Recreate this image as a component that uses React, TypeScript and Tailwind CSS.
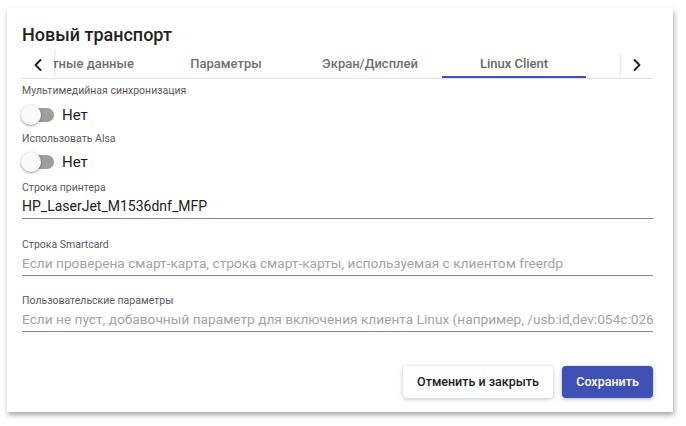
import { ChevronLeft, ChevronRight } from 'lucide-react';

const tabs = ['Учетные данные', 'Параметры', 'Экран/Дисплей', 'Linux Client'];

function Toggle({ label }: { label: string }) {
  return (
    <div className="flex h-[24px] items-center">
      <div className="relative h-[14px] w-[32px] rounded-full bg-[#9e9e9e]">
        <div className="absolute left-[-1px] top-[-3px] h-[20px] w-[20px] rounded-full bg-[#fafafa] shadow-[0_1px_3px_rgba(0,0,0,0.4)]" />
      </div>
      <span className="ml-[8px] text-[15px] text-[#212121]">{label}</span>
    </div>
  );
}

function Label({ children, className = '' }: { children: string; className?: string }) {
  return <div className={`h-[14px] text-[10.5px] leading-[14px] text-[#5a5a5a] ${className}`}>{children}</div>;
}

function TextField({ value, placeholder }: { value?: string; placeholder?: string }) {
  return (
    <div className="flex h-[24px] items-center overflow-hidden whitespace-nowrap border-b border-[#8a8a8a]">
      {value ? (
        <span className="text-[14px] text-[#212121]">{value}</span>
      ) : (
        <span className="text-[13.7px] text-[#a3a3a3]">{placeholder}</span>
      )}
    </div>
  );
}

export default function App() {
  return (
    <div className="h-[426px] w-[686px] overflow-hidden bg-white pl-[7px] pt-[8px] font-['Roboto',sans-serif]">
      <div className="flex h-[404px] w-[666px] flex-col bg-white pl-[15px] pr-[20px] pt-[14px] shadow-[1px_3px_5px_rgba(0,0,0,0.35)]">
        <h1 className="h-[26px] text-[18px] font-medium leading-[26px] text-[#222222]">Новый транспорт</h1>

        <div className="flex h-[31px] border-b border-[#e0e0e0]">
          <button className="relative z-10 flex w-[32px] items-center justify-center bg-white pt-[4px] shadow-[2px_0_2px_-1px_rgba(0,0,0,0.12)]">
            <ChevronLeft size={20} strokeWidth={2.25} className="text-[#212121]" />
          </button>
          <div className="flex-1 overflow-hidden">
            <div className="ml-[-44px] flex h-full">
              {tabs.map((t) => (
                <div
                  key={t}
                  className={`relative flex w-[144px] shrink-0 items-center justify-center pt-[2px] text-[13px] font-medium whitespace-nowrap ${
                    t === 'Linux Client' ? 'text-[#666666]' : 'text-[#707070]'
                  }`}
                >
                  {t}
                  {t === 'Linux Client' && <div className="absolute bottom-[0px] left-0 h-[2px] w-full bg-[#3f51b5]" />}
                </div>
              ))}
            </div>
          </div>
          <button className="relative z-10 mt-[4px] flex w-[32px] items-center justify-center bg-white shadow-[-2px_0_2px_-1px_rgba(0,0,0,0.12)]">
            <ChevronRight size={20} strokeWidth={2.25} className="text-[#212121]" />
          </button>
        </div>

        <Label className="mt-[5px]">Мультимедийная синхронизация</Label>
        <div className="mt-[5px]">
          <Toggle label="Нет" />
        </div>
        <Label className="mt-[5px]">Использовать Alsa</Label>
        <div className="mt-[4px]">
          <Toggle label="Нет" />
        </div>

        <Label className="mt-[7px]">Строка принтера</Label>
        <TextField value="HP_LaserJet_M1536dnf_MFP" />

        <Label className="mt-[19px]">Строка Smartcard</Label>
        <TextField placeholder="Если проверена смарт-карта, строка смарт-карты, используемая с клиентом freerdp" />

        <Label className="mt-[18px]">Пользовательские параметры</Label>
        <TextField placeholder="Если не пуст, добавочный параметр для включения клиента Linux (например, /usb:id,dev:054c:0268)" />

        <div className="mt-[34px] flex justify-end gap-[9px]">
          <button className="h-[32px] w-[150px] rounded-[4px] bg-white text-[12.5px] font-medium text-[#212121] shadow-[0_1px_4px_rgba(0,0,0,0.25)]">
            Отменить и закрыть
          </button>
          <button className="h-[32px] w-[91px] rounded-[4px] bg-[#3f51b5] text-[12.5px] font-medium text-white shadow-[0_1px_4px_rgba(0,0,0,0.3)]">
            Сохранить
          </button>
        </div>
      </div>
    </div>
  );
}
